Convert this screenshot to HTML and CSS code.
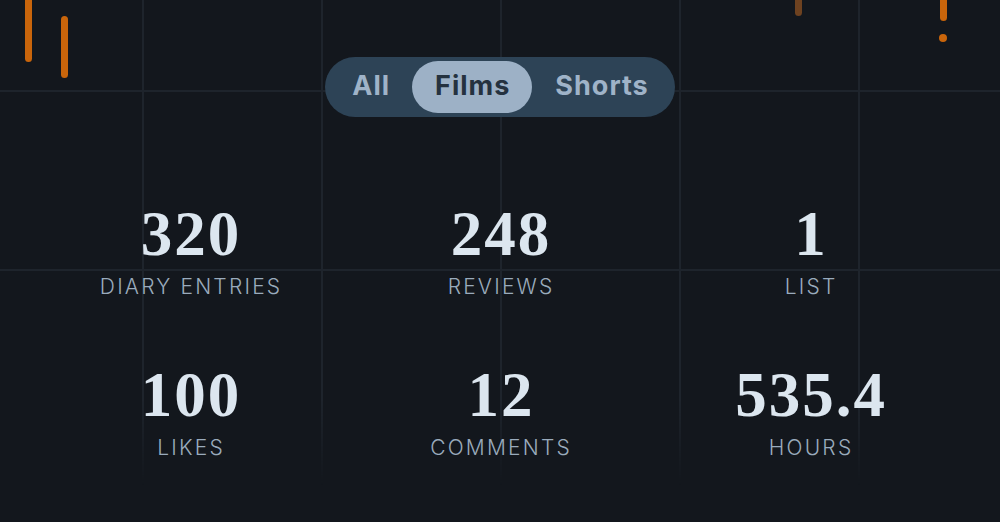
FILE: index.html
```html
<!DOCTYPE html>
<html lang="en">
<head>
<meta charset="utf-8">
<title>Stats</title>
<link rel="stylesheet" href="styles.css">
</head>
<body>
<main class="page">
  <div class="confetti" aria-hidden="true">
    <span class="bar bar-a"></span>
    <span class="bar bar-b"></span>
    <span class="bar bar-c"></span>
    <span class="bar bar-d"></span>
    <span class="dot dot-d"></span>
  </div>

  <nav class="toggle">
    <button class="toggle-btn">All</button>
    <button class="toggle-btn is-active">Films</button>
    <button class="toggle-btn">Shorts</button>
  </nav>

  <section class="stats">
    <div class="stat"><div class="num">320</div><div class="label">Diary Entries</div></div>
    <div class="stat"><div class="num">248</div><div class="label">Reviews</div></div>
    <div class="stat"><div class="num">1</div><div class="label">List</div></div>
    <div class="stat"><div class="num">100</div><div class="label">Likes</div></div>
    <div class="stat"><div class="num">12</div><div class="label">Comments</div></div>
    <div class="stat"><div class="num">535.4</div><div class="label">Hours</div></div>
  </section>
</main>
</body>
</html>
```

FILE: styles.css
```css
* { box-sizing: border-box; }

html, body {
  margin: 0;
  padding: 0;
  background: #13171d;
}

.page {
  position: relative;
  width: 1000px;
  height: 522px;
  overflow: hidden;
  display: flex;
  flex-direction: column;
  align-items: center;
  padding-top: 57px;
  font-family: "Inter", "Liberation Sans", sans-serif;
}

/* vertical grid lines, fading out toward the bottom */
.page::before {
  content: "";
  position: absolute;
  inset: 0;
  background-image: linear-gradient(to right, #1e242c 0, #1e242c 2px, transparent 2px);
  background-size: 179px 100%;
  background-position: 142px 0;
  -webkit-mask-image: linear-gradient(to bottom, #000 0, #000 400px, transparent 485px);
  mask-image: linear-gradient(to bottom, #000 0, #000 400px, transparent 485px);
  pointer-events: none;
}

/* horizontal grid lines (two rows only) */
.page::after {
  content: "";
  position: absolute;
  left: 0;
  right: 0;
  top: 0;
  height: 300px;
  background-image: linear-gradient(to bottom, #1e242c 0, #1e242c 2px, transparent 2px);
  background-size: 100% 179px;
  background-position: 0 90px;
  pointer-events: none;
}

.confetti span {
  position: absolute;
  border-radius: 4px;
  z-index: 1;
}

.bar { width: 7px; }
.bar-a { left: 25px; top: -6px; height: 68px; background: #c9650b; }
.bar-b { left: 61px; top: 16px; height: 62px; background: #c9650b; }
.bar-c { left: 795px; top: -6px; height: 22px; background: #6e4220; }
.bar-d { left: 940px; top: -6px; height: 27px; background: #c9650b; }
.dot-d { left: 939px; top: 34px; width: 8px; height: 8px; border-radius: 50%; background: #c9650b; }

.toggle {
  position: relative;
  z-index: 1;
  display: flex;
  padding: 4px;
  height: 60px;
  border-radius: 30px;
  background: #2d4356;
}

.toggle-btn {
  font: 700 27px/1 "Inter", "Liberation Sans", sans-serif;
  letter-spacing: 1px;
  color: #9fb3c8;
  background: transparent;
  border: 0;
  height: 52px;
  padding: 0 22px 4px 23px;
  border-radius: 26px;
  cursor: pointer;
}

.toggle-btn.is-active {
  background: #9db1c6;
  color: #25323f;
}

.stats {
  position: relative;
  z-index: 1;
  margin-top: 86px;
  width: 930px;
  display: grid;
  grid-template-columns: repeat(3, 1fr);
  row-gap: 65px;
}

.stat {
  display: flex;
  flex-direction: column;
  align-items: center;
  gap: 10px;
}

.num {
  font: 700 63px/62px "Liberation Serif", serif;
  color: #dce6ef;
  letter-spacing: 2px;
  padding-left: 2px;
}

.label {
  font: 300 21px/24px "Inter", "Liberation Sans", sans-serif;
  color: #9aabbc;
  text-transform: uppercase;
  letter-spacing: 2.2px;
  padding-left: 2.2px;
}
```
